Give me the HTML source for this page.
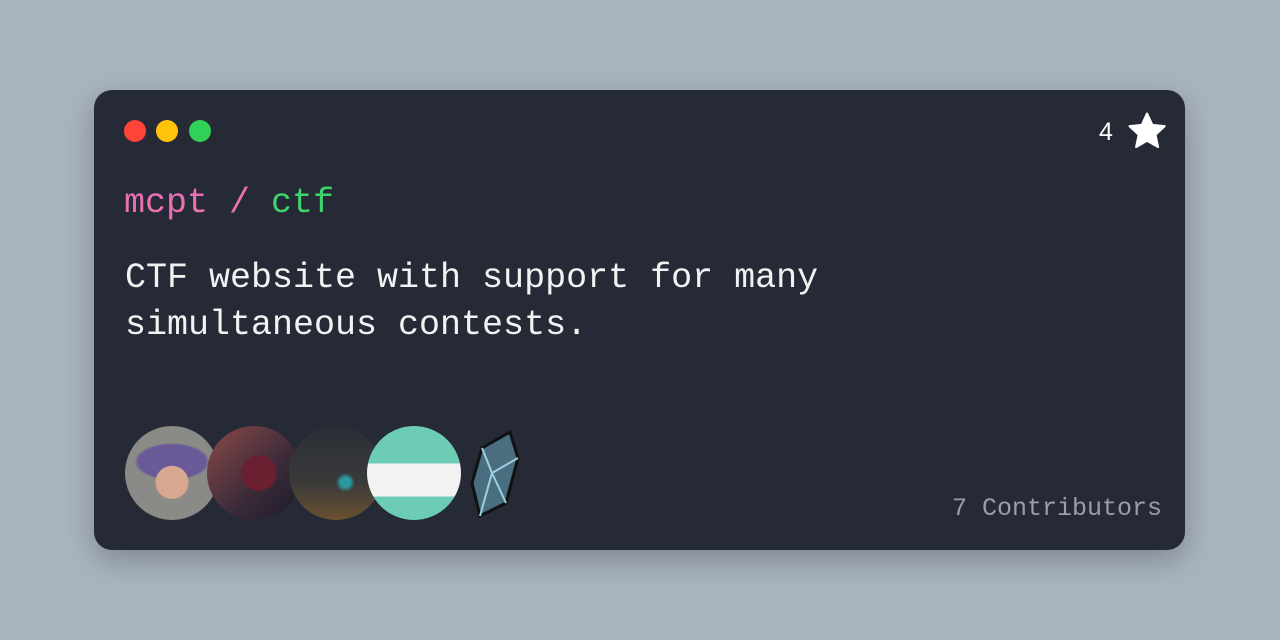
<!DOCTYPE html>
<html><head><style>
body{margin:0;width:1280px;height:640px;background:#a9b4c0;position:relative;overflow:hidden;font-family:"Liberation Mono",monospace}
.card{position:absolute;left:94px;top:90px;width:1091px;height:460px;background:#262a36;border-radius:18px;box-shadow:0 10px 30px rgba(0,0,0,.25)}
.dot{position:absolute;top:120px;width:22px;height:22px;border-radius:50%}
.t{position:absolute;white-space:nowrap}
.av{position:absolute;top:426px;width:94px;height:94px;border-radius:50%;overflow:hidden}
</style></head><body>
<div class="card"></div>
<div class="dot" style="left:124px;background:#ff453a"></div>
<div class="dot" style="left:156px;background:#ffc40a"></div>
<div class="dot" style="left:189px;background:#32d158"></div>
<div class="t" style="left:1099px;top:118px;font-size:25px;color:#fff;font-family:'Liberation Sans',sans-serif">4</div>
<svg style="position:absolute;left:1125px;top:109px" width="44" height="44" viewBox="0 0 24 24"><path d="M12 2.5l2.9 6.2 6.7.7-5 4.6 1.4 6.7L12 17.3l-5.9 3.4 1.4-6.7-5-4.6 6.7-.7z" fill="#fff" stroke="#fff" stroke-width="1.2" stroke-linejoin="round"/></svg>
<div class="t" style="left:124px;top:183px;font-size:35px;line-height:40px"><span style="color:#ec6fb2">mcpt / </span><span style="color:#3fd36e">ctf</span></div>
<div class="t" style="left:125px;top:255px;font-size:35px;line-height:47px;color:#f2f2f2">CTF website with support for many<br>simultaneous contests.</div>
<div class="av" style="left:125px;background:radial-gradient(circle at 50% 60%,#d8a890 0 22%,transparent 23%),radial-gradient(ellipse 40% 20% at 50% 38%,#6a5a9a 0 90%,transparent 100%),#8a8a86"></div>
<div class="av" style="left:207px;background:radial-gradient(circle at 55% 50%,#6a2030 0 25%,transparent 26%),linear-gradient(135deg,#8a4a48,#3a2a3a 60%,#1a1a28)"></div>
<div class="av" style="left:289px;background:radial-gradient(circle at 60% 60%,#2a9aa0 0 6%,transparent 12%),linear-gradient(180deg,#2a2e36,#3a3a3a 60%,#6a5030)"></div>
<div class="av" style="left:367px;background:linear-gradient(180deg,#6dcdb4 0 40%,#f2f2f2 40% 75%,#6dcdb4 75%)"></div>
<svg style="position:absolute;left:462px;top:428px" width="60" height="92" viewBox="0 0 60 92"><path d="M10 55 L20 20 L48 4 L56 30 L44 75 L18 88 Z" fill="#4a6e80" stroke="#111" stroke-width="3"/><path d="M20 20 L30 45 L56 30 M30 45 L18 88 M30 45 L44 75" stroke="#9ad0e0" stroke-width="2" fill="none"/></svg>
<div class="t" style="left:952px;top:494px;font-size:25px;color:#9a9ea8">7 Contributors</div>
</body></html>
